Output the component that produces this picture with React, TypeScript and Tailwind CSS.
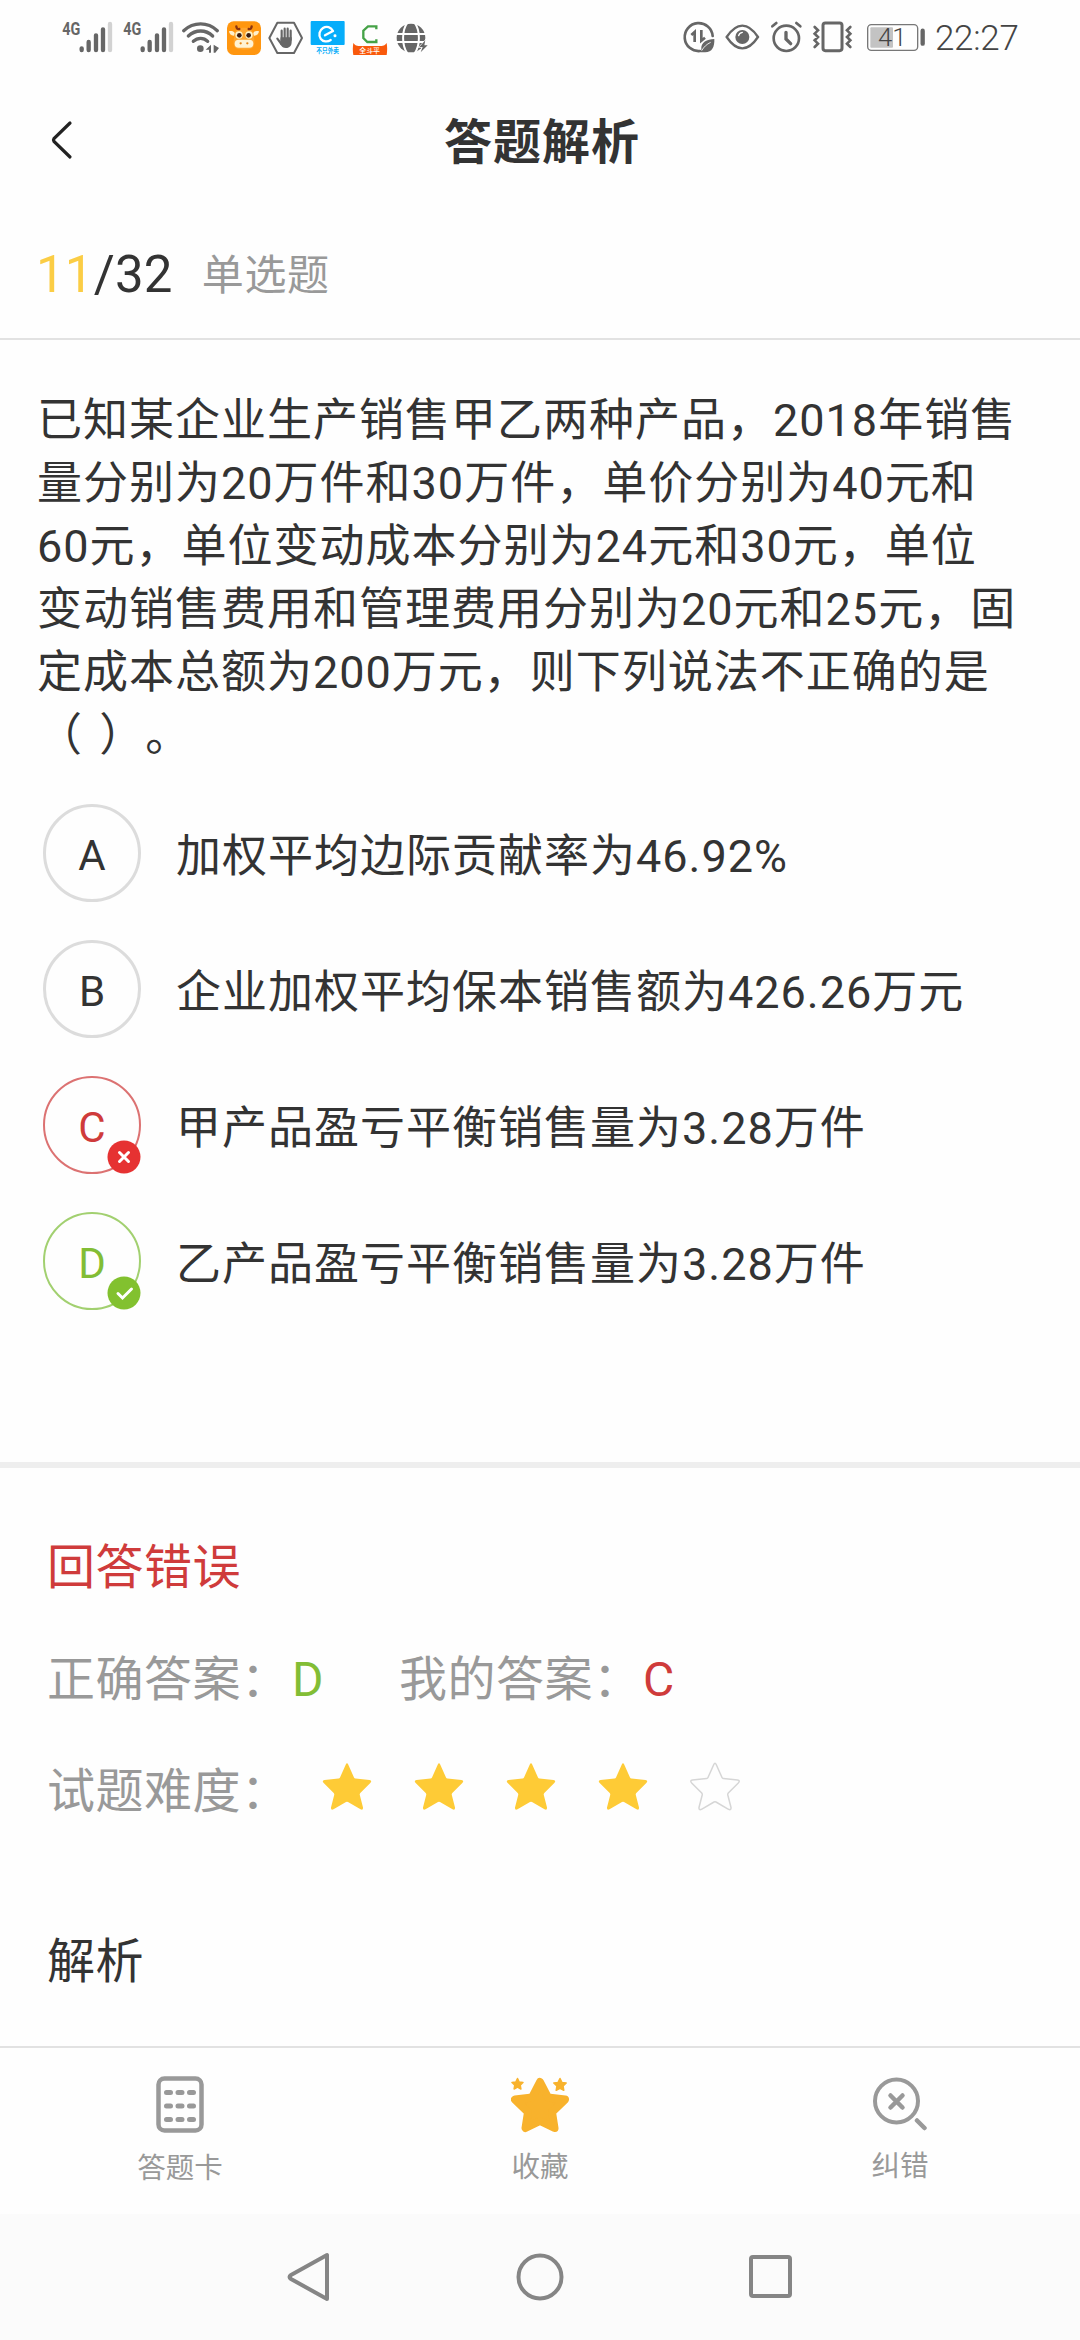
import type { ReactNode } from 'react';
import { clsx } from 'clsx';

interface IconSlotProps {
  x: number;
  width: number;
  children: ReactNode;
}

type AnswerState = 'idle' | 'wrong' | 'right';

interface Option {
  key: string;
  text: string;
  state: AnswerState;
}

const QUESTION_LINES = [
  '已知某企业生产销售甲乙两种产品，2018年销售',
  '量分别为20万件和30万件，单价分别为40元和',
  '60元，单位变动成本分别为24元和30元，单位',
  '变动销售费用和管理费用分别为20元和25元，固',
  '定成本总额为200万元，则下列说法不正确的是',
  '（ ）。',
];

const OPTIONS: Option[] = [
  { key: 'A', text: '加权平均边际贡献率为46.92%', state: 'idle' },
  { key: 'B', text: '企业加权平均保本销售额为426.26万元', state: 'idle' },
  { key: 'C', text: '甲产品盈亏平衡销售量为3.28万件', state: 'wrong' },
  { key: 'D', text: '乙产品盈亏平衡销售量为3.28万件', state: 'right' },
];

const DIFFICULTY = 4;
const MAX_DIFFICULTY = 5;

// Status icons share one 3x grid; every slot shows its own part of it
function IconSlot({ x, width, children }: IconSlotProps) {
  return (
    <svg width={width / 3} height={80} viewBox={`${x} 0 ${width} 240`} className="shrink-0" fill="none">
      {children}
    </svg>
  );
}

function Signal({ x }: { x: number }) {
  return (
    <IconSlot x={x} width={182}>
      <text
        x={x + 7}
        y="106"
        fontSize="56"
        fontWeight="700"
        textLength="54"
        lengthAdjust="spacingAndGlyphs"
        fill="#666"
        fontFamily="Roboto, sans-serif"
      >
        4G
      </text>
      <g stroke="#666" strokeWidth="13" strokeLinecap="round">
        <path d={`M${x + 65} 145v5M${x + 86} 126v24M${x + 108} 106v44M${x + 129} 88v62`} />
        <path d={`M${x + 150} 72v78`} stroke="#d2d2d2" />
      </g>
    </IconSlot>
  );
}

function StatusBar() {
  return (
    <div className="flex h-20 items-start justify-between pl-[60px] pr-[60px]">
      <div className="flex">
        <Signal x={60} />
        <Signal x={242} />

        {/* Wifi */}
        <IconSlot x={424} width={128}>
          <g stroke="#666" strokeWidth="10" strokeLinecap="round">
            <path d="M432 92c30-27 72-27 101 0M446 108c22-20 52-20 73 0M461 124c13-12 31-12 43 0" />
          </g>
          <circle cx="482" cy="146" r="10" fill="#666" />
          <path d="M514 134v24h-6v-9h-10zM522 134v24h5l11-14z" fill="#666" />
        </IconSlot>

        {/* Ox app */}
        <IconSlot x={552} width={124}>
          <rect x="561" y="64" width="102" height="101" rx="20" fill="#ff960f" />
          <path
            d="M567 94c8-3 15 0 18 6 2-13 12-17 27-17s25 4 27 17c3-6 10-9 18-6-1 10-7 15-16 14 2 9 4 18 0 30-3 8-12 11-29 11s-26-3-29-11c-4-12-2-21 0-30-9 1-15-4-16-14z"
            fill="#ffa52e"
          />
          <path d="M567 94c7-2 13-1 17 5l-2 8c-8 0-14-5-15-13zM657 94c-7-2-13-1-17 5l2 8c8 0 14-5 15-13z" fill="#fff0cc" />
          <path d="M589 79c0 6 4 9 9 8M635 79c0 6-4 9-9 8" stroke="#8a3411" strokeWidth="7" strokeLinecap="round" />
          <circle cx="597" cy="105" r="11" fill="#fff3c8" />
          <circle cx="627" cy="105" r="11" fill="#fff3c8" />
          <circle cx="598" cy="106" r="7" fill="#3d1d12" />
          <circle cx="626" cy="106" r="7" fill="#3d1d12" />
          <rect x="584" y="119" width="56" height="24" rx="12" fill="#fff3d4" />
          <circle cx="602" cy="130" r="3.5" fill="#e8850f" />
          <circle cx="622" cy="130" r="3.5" fill="#e8850f" />
        </IconSlot>

        {/* Hand in hexagon */}
        <IconSlot x={676} width={126}>
          <path d="M713 68h50l24 46-24 45h-50l-24-45z" stroke="#666" strokeWidth="6" strokeLinejoin="round" />
          <path
            d="M726 120V92M735 118V86M744 118V86M753 120V92M713 116l12 16"
            stroke="#666"
            strokeWidth="6.500"
            strokeLinecap="round"
          />
          <path d="M723 112h33v14c0 11-6 18-17 18-9 0-14-5-18-13z" fill="#666" />
        </IconSlot>

        {/* Blue app */}
        <IconSlot x={802} width={128}>
          <rect x="813" y="63" width="102" height="72" rx="3" fill="#06adfa" />
          <path
            d="M856 106l24-13c-6-12-19-16-30-9-11 7-14 21-7 32 7 9 20 11 30 4"
            stroke="#fff"
            strokeWidth="7"
            strokeLinecap="round"
            strokeLinejoin="round"
          />
          <circle cx="886" cy="107" r="4.500" fill="#fff" />
          <text
            x="830"
            y="159"
            fontSize="19"
            fontWeight="700"
            textLength="68"
            lengthAdjust="spacingAndGlyphs"
            fill="#06adfa"
            fontFamily="'Noto Sans CJK SC', sans-serif"
          >
            不只外卖
          </text>
        </IconSlot>

        {/* Green C app */}
        <IconSlot x={930} width={126}>
          <path d="M1009 88V79h-25l-14 13v22l12 12h27v-8" stroke="#45a247" strokeWidth="7" />
          <path d="M940 129c4 6 9 9 16 9h68c7 0 12-3 16-9 2 13 2 24 0 36H940c-2-12-2-23 0-36z" fill="#f9590b" />
          <text
            x="958"
            y="158"
            fontSize="20"
            fontWeight="500"
            textLength="62"
            lengthAdjust="spacingAndGlyphs"
            fill="#fff"
            fontFamily="'Noto Sans CJK SC', sans-serif"
          >
            全斗平
          </text>
        </IconSlot>

        {/* Globe */}
        <IconSlot x={1056} width={124}>
          <circle cx="1113" cy="114" r="43" fill="#666" />
          <path
            d="M1068 102h90M1068 126h90M1102 68c-17 24-17 68 0 92M1124 68c17 24 17 68 0 92"
            stroke="#fff"
            strokeWidth="6"
          />
          <path d="M1156 121l-18 20h10l-6 16 21-21h-10z" fill="#666" stroke="#fff" strokeWidth="4" paintOrder="stroke" />
        </IconSlot>
      </div>

      <div className="flex">
        {/* Data saver */}
        <IconSlot x={60} width={124}>
          <path d="M120 153A42 42 0 1 1 158 108" stroke="#666" strokeWidth="8" strokeLinecap="round" />
          <path d="M94 105l10-9v30M124 90v32l11-9" stroke="#666" strokeWidth="8" />
          <path d="M163 117c-22 1-41 9-39 31l-2 9h12c22 1 30-16 29-40z" fill="#666" />
          <path d="M125 152c7-12 15-19 27-25" stroke="#fff" strokeWidth="2.5" />
        </IconSlot>

        {/* Eye */}
        <IconSlot x={184} width={130}>
          <path d="M201 111c10-15 25-34 47-34s37 19 47 34c-10 15-25 34-47 34s-37-19-47-34z" stroke="#666" strokeWidth="7" />
          <circle cx="248" cy="111" r="21" fill="#666" />
          <path d="M237 107c1-6 5-9 11-10" stroke="#fff" strokeWidth="4" strokeLinecap="round" />
        </IconSlot>

        {/* Alarm */}
        <IconSlot x={314} width={130}>
          <g stroke="#666" strokeWidth="8" strokeLinecap="round">
            <circle cx="378" cy="115" r="38" />
            <path d="M336 79l12-10M420 79l-12-10" />
            <path d="M377 97v20l14 14" strokeWidth="10" />
          </g>
        </IconSlot>

        {/* Vibrate */}
        <IconSlot x={444} width={162}>
          <g stroke="#666" strokeWidth="9">
            <rect x="489" y="69" width="57" height="83" rx="7" />
            <path
              d="M464 81l10 10-10 10 10 10-10 10 10 10-10 10M571 81l-10 10 10 10-10 10 10 10-10 10 10 10"
              strokeWidth="8"
              strokeLinecap="round"
            />
          </g>
        </IconSlot>

        {/* Battery */}
        <IconSlot x={606} width={219}>
          <rect x="623" y="74" width="150" height="77" rx="11" stroke="#777" strokeWidth="4" />
          <rect x="631" y="82" width="68" height="61" rx="3" fill="#c3c3c3" />
          <path d="M788 92v39" stroke="#666" strokeWidth="13" strokeLinecap="round" />
          <text x="654" y="138" fontSize="77" fontWeight="300" fill="#444" fontFamily="Roboto, sans-serif">
            41
          </text>
        </IconSlot>
        <div className="w-[85px] whitespace-nowrap pt-[19px] text-[35px] font-light leading-[40px] tracking-[-0.3px] text-[#444]">
          22:27
        </div>
      </div>
    </div>
  );
}

function Header() {
  return (
    <header className="grid h-[124px] grid-cols-3 items-center px-12">
      <svg width="26" height="40" viewBox="0 0 26 40" fill="none" className="mt-[-4px]">
        <path d="M22 3 6 18.500Q5 20 6 21.500L22 37" stroke="#222" strokeWidth="3.200" strokeLinecap="round" />
      </svg>
      <h1 className="pl-1 pt-0.5 text-center text-[48px] font-bold leading-none tracking-[1px]">答题解析</h1>
    </header>
  );
}

function OptionBadge({ state }: { state: AnswerState }) {
  if (state === 'idle') return null;
  const isWrong = state === 'wrong';

  return (
    <svg width="34" height="34" viewBox="0 0 34 34" fill="none" className="absolute -bottom-0.5 -right-0.5">
      <circle cx="17" cy="17" r="16.500" fill={isWrong ? '#e63232' : '#82c12f'} />
      <path
        d={isWrong ? 'M12.500 12.500l9 9M21.500 12.500l-9 9' : 'M11 17.500l4.500 4.500 9-9'}
        stroke="#fff"
        strokeWidth="3"
        strokeLinecap="round"
      />
    </svg>
  );
}

function OptionRow({ option }: { option: Option }) {
  return (
    <li className="flex h-[98px] items-center gap-[35px]">
      <span
        className={clsx(
          'relative flex size-[98px] items-center justify-center rounded-full pt-1 text-[42px]',
          option.state === 'idle' && 'border-[3px] border-[#dcdcdc]',
          option.state === 'wrong' && 'border-2 border-[#dc7272] text-[#cf3b3b]',
          option.state === 'right' && 'border-2 border-[#a2d070] text-[#82bd35]'
        )}
      >
        {option.key}
        <OptionBadge state={option.state} />
      </span>
      <span className="pt-1.5 text-[45px] leading-[63px] tracking-[1px]">{option.text}</span>
    </li>
  );
}

const STAR_PATH =
  'M23.800 3.500Q25 1 26.200 3.500L32 16.500Q32.400 17.500 33.500 17.600L47.500 19Q50.500 19.600 48.300 22L38.300 32Q37.500 33 37.800 34L41 46.500Q41.300 49.500 38.500 48.300L26 41Q25 40.500 24 41L11.500 48.300Q8.700 49.500 9 46.500L12.200 34Q12.500 33 11.700 32L1.700 22Q-.5 19.600 2.500 19L16.500 17.600Q17.600 17.500 18 16.500Z';

function DifficultyStar({ filled }: { filled: boolean }) {
  return (
    <svg width="52" height="52" viewBox="-1 0 52 52" fill="none">
      <path d={STAR_PATH} fill={filled ? '#fecb36' : 'none'} stroke={filled ? 'none' : '#d6d6d6'} strokeWidth="1.500" />
    </svg>
  );
}

function TabBar() {
  return (
    <nav className="grid h-[168px] grid-cols-3 border-t-2 border-[#e2e2e2] text-[28.500px] leading-[34px] text-[#999]">
      <div className="flex flex-col items-center pt-7">
        <svg width="48" height="58" viewBox="0 0 48 58" fill="none" stroke="#999" strokeLinecap="round">
          <rect x="2.500" y="2.500" width="43" height="52" rx="6" strokeWidth="4.500" />
          <path
            d="M10.500 16.500h4M22 16.500h4M33.500 16.500h4M10.500 30h4M22 30h4M33.500 30h4M10.500 43.500h4M22 43.500h4M33.500 43.500h4"
            strokeWidth="5"
          />
        </svg>
        <span className="pt-[18px]">答题卡</span>
      </div>
      <div className="flex flex-col items-center pt-7">
        <svg width="58" height="58" viewBox="0 0 58 58" fill="#f8b22c" stroke="#f8b22c" strokeLinejoin="round">
          <path d="M29 6l8 15.500 17 2-13 12.500 2.500 16L29 45l-14.500 7L17 36 4 23.500l17-2z" strokeWidth="8" />
          <path
            d="M6.500 2.500l1.700 3.500 3.800.5-2.800 2.600.7 3.900-3.400-1.800-3.400 1.800.7-3.900L1 6.500 4.800 6zM49 2.500l1.900 3.900 4.300.6-3.100 3 .7 4.300-3.800-2-3.800 2 .7-4.300-3.100-3 4.300-.6z"
            strokeWidth="1.500"
          />
        </svg>
        <span className="pt-[17px]">收藏</span>
      </div>
      <div className="flex flex-col items-center pt-7">
        <svg width="54" height="58" viewBox="0 0 54 58" fill="none" stroke="#999" strokeWidth="4" strokeLinecap="round">
          <circle cx="23.500" cy="25" r="21.500" />
          <path d="M17.500 19.500l12 12M29.500 19.500l-12 12" strokeWidth="4.500" />
          <path d="M44 44.500l7.500 7.500" strokeWidth="4.500" />
        </svg>
        <span className="pt-[16px]">纠错</span>
      </div>
    </nav>
  );
}

function SystemNav() {
  return (
    <div className="flex h-[126px] items-center justify-center gap-[181px] bg-[#fbfbfb]">
      <svg width="48" height="50" viewBox="0 0 48 50" fill="none" stroke="#858585" strokeWidth="4" strokeLinejoin="round">
        <path d="M41 3v44L5 27Q2 25 5 23z" />
      </svg>
      <svg width="50" height="50" viewBox="0 0 50 50" fill="none" stroke="#858585" strokeWidth="4">
        <circle cx="25" cy="25" r="21.500" />
      </svg>
      <svg width="48" height="50" viewBox="0 0 48 50" fill="none" stroke="#858585" strokeWidth="4">
        <rect x="5" y="5" width="39" height="39" rx="2" />
      </svg>
    </div>
  );
}

export default function App() {
  return (
    <div className="flex h-[2340px] w-[1080px] flex-col overflow-hidden bg-[#fefefe] font-[Roboto,'Noto_Sans_CJK_SC',sans-serif] text-[#333]">
      <StatusBar />
      <Header />

      {/* Progress */}
      <div className="flex h-[136px] items-center border-b-2 border-[#e2e2e2] px-9 pt-2">
        <span className="text-[51px] tracking-[0.2px]">
          <span className="text-[#fbcd45]">11</span>/32
        </span>
        <span className="pl-[29px] text-[42px] tracking-[0.7px] text-[#999]">单选题</span>
      </div>

      <main className="flex h-[1122px] flex-col">
        <p className="px-[37px] pt-[49px] text-[45px] leading-[63px] tracking-[1px] [word-spacing:4px] [text-spacing-trim:space-all]">
          {QUESTION_LINES.map((line) => (
            <span key={line} className="block whitespace-pre">
              {line}
            </span>
          ))}
        </p>
        <ul className="flex flex-col gap-[38px] px-[43px] pt-[37px]">
          {OPTIONS.map((option) => (
            <OptionRow key={option.key} option={option} />
          ))}
        </ul>
      </main>

      {/* Result */}
      <section className="h-[584px] border-t-[6px] border-[#eee] px-[47px] pt-[64px] text-[48px] leading-[72px] tracking-[0.5px]">
        <h2 className="text-[#cf3b3b]">回答错误</h2>
        <div className="flex pt-10 text-[#999]">
          <span className="w-[245px]">正确答案：</span>
          <span className="w-[107px] text-[#82bd35]">D</span>
          <span className="w-[244px]">我的答案：</span>
          <span className="text-[#cf3b3b]">C</span>
        </div>
        <div className="flex pt-10 text-[#999]">
          <span className="w-[274px]">试题难度：</span>
          <div className="flex gap-10 pt-[5px]">
            {Array.from({ length: MAX_DIFFICULTY }, (_, i) => (
              <DifficultyStar key={i} filled={i < DIFFICULTY} />
            ))}
          </div>
        </div>
        <h2 className="pt-[98px]">解析</h2>
      </section>

      <TabBar />
      <SystemNav />
    </div>
  );
}
